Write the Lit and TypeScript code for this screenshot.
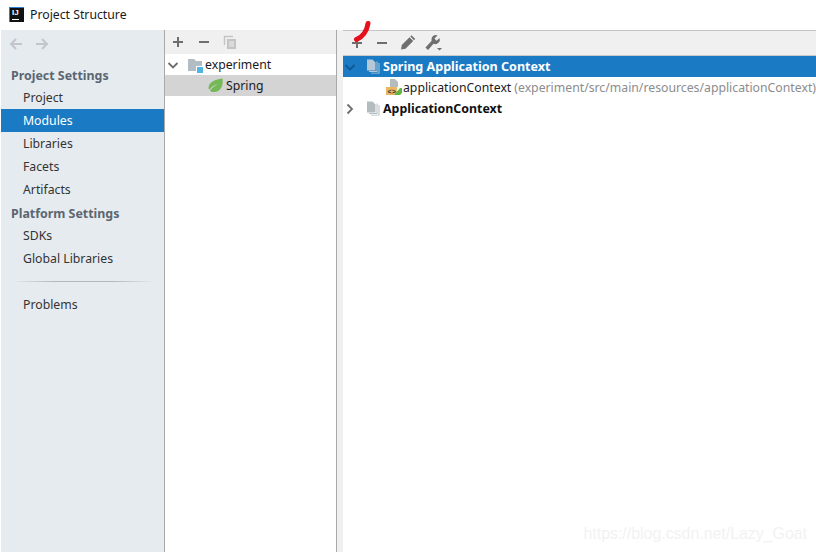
import { LitElement, html, css, svg } from "lit";
import { customElement } from "lit/decorators.js";

const plus = svg`<path d="M8 3v10M3 8h10" stroke="#6e6e6e" stroke-width="2" fill="none"/>`;
const minus = svg`<path d="M3 8h10" stroke="#6e6e6e" stroke-width="2" fill="none"/>`;
const copy = svg`<path d="M2.500 11V2.500H11" fill="none" stroke="#c4c4c4" stroke-width="1.4"/><path d="M5 5h9v10H5z" fill="#c4c4c4"/><path d="M7 8h5M7 10h5M7 12h5" stroke="#f0f0f0" stroke-width="1"/>`;
const pencil = svg`<path d="M2 14.500l.8-4.500 7.700-7.700 3.700 3.700L6.500 13.700z M11.300 1.500l1.200-1.200 3.700 3.700L15 5.200z" fill="#6e6e6e"/>`;
const wrench = svg`<path d="M1.500 13.500L7.500 7a4.500 4.500 0 0 1 6-5.500l-3 3 2 2.200 3-2.800a4.500 4.500 0 0 1-6 5.800L4 16z" fill="#6e6e6e"/><path d="M13 14h5l-2.500 2.600z" fill="#6e6e6e"/>`;
const down = (c: string) => svg`<path d="M2.500 6l4.500 4.500L11.500 6" fill="none" stroke="${c}" stroke-width="1.800"/>`;
const right = svg`<path d="M4.500 3.500L9 8l-4.500 4.500" fill="none" stroke="#6e6e6e" stroke-width="1.800"/>`;
const pages = (c: string) => svg`<path d="M0 1.500h5.500L8.500 4.500V12.500H0z" fill="${c}"/><path d="M9.500 3.500h1v10.500H2v-1h7.500z" fill="${c}"/><path d="M11.500 5h1v10.500H4v-.700h7.500z" fill="${c}"/>`;

@customElement("app-root")
export class AppRoot extends LitElement {
  static styles = css`
    :host { display: flex; flex-direction: column; width: 816px; height: 552px; overflow: hidden; background: #fff;
      font-family: "Noto Sans", "Open Sans", sans-serif; font-size: 12.25px; color: #1a1a1a; position: relative; }
    svg { display: block; flex: none; }
    .title { height: 30px; display: flex; align-items: center; gap: 6px; padding-left: 9px; flex: none; }
    .title span { margin-bottom: 1px; }
    .logo { width: 15px; height: 15px; background: #111; border: 1px solid #2d7fd3; border-width: 1px 0 0 1px; color: #fff; font: bold 8px/10px "Liberation Sans", sans-serif; padding-left: 2px; box-sizing: border-box; position: relative; margin-bottom: 1px; }
    .logo::after { content: ""; position: absolute; left: 2px; bottom: 2px; width: 7px; height: 1px; background: #fff; }
    .body { flex: 1; display: flex; min-height: 0; }
    .side { width: 163px; margin-left: 1px; background: #e6ebf0; border-right: 1px solid #a9a9a9; flex: none; }
    .nav { height: 30px; display: flex; gap: 10px; padding: 6px 0 0 7px; box-sizing: border-box; }
    .sec { font-weight: 700; font-size: 12.400px; color: #5b6670; padding-left: 10px; height: 23px; line-height: 25px; }
    .sec.first { margin-top: 3px; }
    .item { padding-left: 22px; height: 23px; line-height: 23px; color: #333; }
    .item.sel { background: #1a7bc4; color: #fff; }
    .sep { height: 1px; margin: 11px 8px 11px 10px; background: linear-gradient(90deg, #e6ebf0, #b4b8bc 30%, #b4b8bc 70%, #e6ebf0); }
    .mid { width: 171px; flex: none; border-right: 1px solid #a9a9a9; display: flex; flex-direction: column; }
    .tb { height: 24px; background: #f0f0f0; display: flex; align-items: center; flex: none; }
    .mid .tb { padding-left: 5px; gap: 10px; }
    .row { height: 21px; display: flex; align-items: center; white-space: nowrap; }
    .row.sel { background: #d4d4d4; }
    .exp { padding-left: 1px; }
    .exp .tree { margin-right: 5px; }
    .exp .pg { margin-right: 1px; }
    .spring { padding-left: 43px; }
    .spring .pg { margin-right: 3px; }
    .gap { width: 6px; background: #f0f0f0; flex: none; }
    .main { flex: 1; min-width: 0; display: flex; flex-direction: column; border-top: 1px solid #c4c4c4; overflow: hidden; }
    .main .tb { border-bottom: 1px solid #c9c9c9; padding-left: 6px; gap: 9px; }
    .row.blue { background: #1a7bc4; color: #fff; font-weight: 700; font-size: 12.550px; }
    .b { font-weight: 700; color: #111; font-size: 12.400px; }
    .hint { color: #8c8c8c; margin-left: 3px; }
    .child { padding-left: 43px; }
    .tree { margin-right: 8px; }
    .mark { position: absolute; left: 352px; top: 19px; }
    .wm { position: absolute; right: 9px; bottom: 9px; color: #f2f2f2; font: 15.900px "Liberation Sans", sans-serif; }
  `;
  private ic(w: number, h: number, c: unknown, cls = "") {
    return html`<svg class=${cls} width=${w} height=${h} viewBox="0 0 ${w} ${h}">${c}</svg>`;
  }
  render() {
    return html`
      <div class="title"><div class="logo">IJ</div><span>Project Structure</span></div>
      <div class="body">
        <div class="side">
          <div class="nav">
            ${this.ic(16, 16, svg`<path d="M14 8H3M8 3L3 8l5 5" fill="none" stroke="#c2c6ca" stroke-width="2"/>`)}
            ${this.ic(16, 16, svg`<path d="M2 8h11M8 3l5 5-5 5" fill="none" stroke="#c2c6ca" stroke-width="2"/>`)}
          </div>
          <div class="sec first">Project Settings</div>
          <div class="item">Project</div>
          <div class="item sel">Modules</div>
          <div class="item">Libraries</div>
          <div class="item">Facets</div>
          <div class="item">Artifacts</div>
          <div class="sec">Platform Settings</div>
          <div class="item">SDKs</div>
          <div class="item">Global Libraries</div>
          <div class="sep"></div>
          <div class="item">Problems</div>
        </div>
        <div class="mid">
          <div class="tb">
            ${this.ic(16, 16, plus)}${this.ic(16, 16, minus)}${this.ic(16, 16, copy)}
          </div>
          <div class="row exp">
            ${this.ic(16, 16, down("#6e6e6e"), "tree")}
            ${this.ic(17, 16, svg`<path d="M1 2h6l2 2h6v10H1z" fill="#b2bcc3"/><rect x="9" y="9" width="7" height="7" fill="#fff"/><rect x="10" y="10" width="6" height="6" fill="#4fb6e4"/>`, "pg")}
            <span>experiment</span>
          </div>
          <div class="row sel spring">
            ${this.ic(15, 15, svg`<path d="M.500 10.500C.500 4.500 6 1.500 14.500.500c1 8-2.500 13-8 13.500C4 14.200 2.500 13.500 2 12.500c2-3 5-5 8-6.500-3 .500-6 2.500-8.500 5.500z" fill="#74b857"/>`, "pg")}
            <span>Spring</span>
          </div>
        </div>
        <div class="gap"></div>
        <div class="main">
          <div class="tb">
            ${this.ic(16, 16, plus)}${this.ic(16, 16, minus)}${this.ic(16, 16, pencil)}${this.ic(18, 18, wrench)}
          </div>
          <div class="row blue">
            ${this.ic(16, 16, down("#0d5a94"), "tree")}
            ${this.ic(16, 18, pages("#b4c8d8"))}
            <span>Spring Application Context</span>
          </div>
          <div class="row child">
            ${this.ic(17, 17, svg`<path d="M4 0h5l3 3v5H4z" fill="#b5bcc0"/><rect x="0" y="8" width="11" height="8" fill="#e9b864"/><path d="M8 16l6-7h2v5l-2 2z" fill="#62b543"/><text x="1.500" y="15" font-size="7" font-family="Liberation Mono" font-weight="700" fill="#333">&lt;&gt;</text>`)}
            <span>applicationContext</span><span class="hint">(experiment/src/main/resources/applicationContext)</span>
          </div>
          <div class="row b">
            ${this.ic(16, 16, right, "tree")}
            ${this.ic(16, 18, pages("#b5bcc0"))}
            <span>ApplicationContext</span>
          </div>
        </div>
      </div>
      <svg class="mark" width="20" height="26" viewBox="0 0 20 26"><path d="M4.500 20.500C10 18 15 12 16 4.500" fill="none" stroke="#e5101c" stroke-width="5" stroke-linecap="round"/></svg>
      <div class="wm">https://blog.csdn.net/Lazy_Goat</div>
    `;
  }
}
